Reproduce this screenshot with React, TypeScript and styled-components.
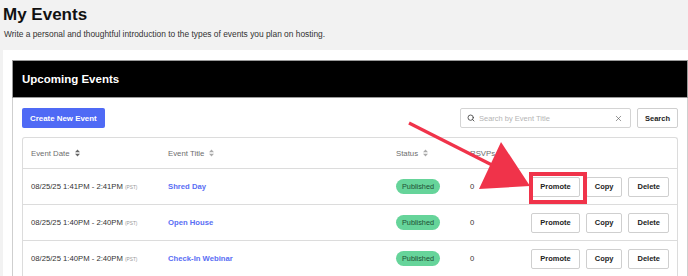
import React from "react";
import styled, { createGlobalStyle } from "styled-components";
import { Search, X } from "lucide-react";

const GlobalStyle = createGlobalStyle`
  html, body { margin: 0; padding: 0; }
  body {
    background: #f2f2f2;
    font-family: "Liberation Sans", Arial, sans-serif;
    overflow: hidden;
    width: 688px;
    height: 276px;
  }
  * { box-sizing: border-box; }
`;

const Page = styled.div`
  position: relative;
  width: 688px;
  height: 276px;
  padding: 5px 0 0 3px;
  overflow: hidden;
`;

const Title = styled.h1`
  margin: 0;
  font-size: 17px;
  line-height: 20px;
  font-weight: 700;
  color: #111;
`;

const Subtitle = styled.p`
  margin: 4px 0 0 1px;
  font-size: 8.4px;
  line-height: 10px;
  color: #333;
`;

const Card = styled.div`
  margin-top: 11px;
  background: #fff;
  padding: 10px 0 0 9px;
`;

const Panel = styled.div`
  width: 676px;
`;

const PanelHeader = styled.div`
  height: 38px;
  background: #000;
  border: 1px solid #9a9a9a;
  display: flex;
  align-items: center;
  padding-left: 9px;
  color: #fff;
  font-size: 11.5px;
  font-weight: 700;
`;

const PanelBody = styled.div`
  border-left: 1px solid #cfcfcf;
  border-right: 1px solid #cfcfcf;
  padding: 10px 9px 0 9px;
`;

const Toolbar = styled.div`
  display: flex;
  justify-content: space-between;
  align-items: center;
`;

const PrimaryButton = styled.button`
  height: 20px;
  padding: 0 8px;
  border: none;
  border-radius: 2px;
  background: #4f6af5;
  color: #fff;
  font-family: inherit;
  font-size: 7.9px;
  font-weight: 700;
  cursor: pointer;
`;

const SearchGroup = styled.div`
  display: flex;
  gap: 6px;
`;

const SearchBox = styled.div`
  width: 171px;
  height: 20px;
  border: 1px solid #d4d4d4;
  border-radius: 2px;
  display: flex;
  align-items: center;
  padding: 0 7px 0 6px;
  gap: 4px;
  color: #444;
`;

const SearchInput = styled.input`
  flex: 1;
  min-width: 0;
  border: none;
  outline: none;
  padding: 0;
  font-family: inherit;
  font-size: 7.5px;
  color: #333;
  &::placeholder { color: #b5b5b5; }
`;

const OutlineButton = styled.button<{ $pad?: number }>`
  height: 20px;
  padding: 0 ${(p) => p.$pad ?? 8}px;
  border: 1px solid #cfcfcf;
  border-radius: 2px;
  background: #fff;
  color: #222;
  font-family: inherit;
  font-size: 7.5px;
  font-weight: 700;
  cursor: pointer;
`;

const Table = styled.div`
  margin-top: 9px;
  border: 1px solid #dcdcdc;
  border-bottom: none;
  border-radius: 3px 3px 0 0;
  display: grid;
  grid-template-columns: 137px 228px 74px 1fr auto;
`;

const HeadCell = styled.div`
  height: 31px;
  border-bottom: 1px solid #dcdcdc;
  display: flex;
  align-items: center;
  gap: 5px;
  padding-left: 8px;
  font-size: 7.8px;
  color: #6e6e6e;
`;

const Cell = styled.div<{ $right?: boolean }>`
  height: 36px;
  border-bottom: 1px solid #dcdcdc;
  display: flex;
  align-items: center;
  padding-left: ${(p) => (p.$right ? 0 : 8)}px;
  padding-right: ${(p) => (p.$right ? 8 : 0)}px;
  gap: 6px;
  justify-content: ${(p) => (p.$right ? "flex-end" : "flex-start")};
  font-size: 7.7px;
  color: #333;
`;

const Tz = styled.span`
  font-size: 4.8px;
  color: #999;
  margin-left: 2px;
`;

const EventLink = styled.a`
  color: #5a6ef4;
  font-weight: 700;
  text-decoration: none;
  font-size: 7.7px;
`;

const Badge = styled.span`
  display: inline-flex;
  align-items: center;
  height: 15px;
  padding: 0 6px;
  border-radius: 8px;
  background: #66d49a;
  color: #1e4f34;
  font-size: 7.3px;
`;

const Overlay = styled.svg`
  position: absolute;
  left: 0;
  top: 0;
  pointer-events: none;
`;

const SortIcon = ({ dark }: { dark?: boolean }) => (
  <svg width="5" height="8" viewBox="0 0 5 8">
    <path d="M0 3.3 L2.5 0.5 L5 3.3 Z M0 4.7 L5 4.7 L2.5 7.5 Z" fill={dark ? "#666" : "#aaa"} />
  </svg>
);

const events = [
  { date: "08/25/25 1:41PM - 2:41PM", title: "Shred Day" },
  { date: "08/25/25 1:40PM - 2:40PM", title: "Open House" },
  { date: "08/25/25 1:40PM - 2:40PM", title: "Check-In Webinar" },
];

export default function App() {
  return (
    <>
      <GlobalStyle />
      <Page>
        <Title>My Events</Title>
        <Subtitle>
          Write a personal and thoughtful introduction to the types of events you plan on hosting.
        </Subtitle>
        <Card>
          <Panel>
            <PanelHeader>Upcoming Events</PanelHeader>
            <PanelBody>
              <Toolbar>
                <PrimaryButton>Create New Event</PrimaryButton>
                <SearchGroup>
                  <SearchBox>
                    <Search size={8} strokeWidth={2.6} />
                    <SearchInput placeholder="Search by Event Title" />
                    <X size={9} strokeWidth={1.6} color="#555" />
                  </SearchBox>
                  <OutlineButton $pad={7}>Search</OutlineButton>
                </SearchGroup>
              </Toolbar>
              <Table>
                <HeadCell>
                  Event Date <SortIcon dark />
                </HeadCell>
                <HeadCell>
                  Event Title <SortIcon />
                </HeadCell>
                <HeadCell>
                  Status <SortIcon />
                </HeadCell>
                <HeadCell>RSVPs</HeadCell>
                <HeadCell />
                {events.map((e, i) => (
                  <React.Fragment key={i}>
                    <Cell>
                      <span>
                        {e.date}
                        <Tz>(PST)</Tz>
                      </span>
                    </Cell>
                    <Cell>
                      <EventLink href="#">{e.title}</EventLink>
                    </Cell>
                    <Cell>
                      <Badge>Published</Badge>
                    </Cell>
                    <Cell>0</Cell>
                    <Cell $right>
                      <OutlineButton>Promote</OutlineButton>
                      <OutlineButton>Copy</OutlineButton>
                      <OutlineButton>Delete</OutlineButton>
                    </Cell>
                  </React.Fragment>
                ))}
              </Table>
            </PanelBody>
          </Panel>
        </Card>
        <Overlay width="688" height="276" viewBox="0 0 688 276">
          <line x1="409" y1="123" x2="492" y2="165" stroke="#f0334a" strokeWidth="3.2" />
          <polygon points="501,142 479,189 530,186" fill="#f0334a" />
          <rect x="531" y="174" width="54" height="28" fill="none" stroke="#f0334a" strokeWidth="4" />
        </Overlay>
      </Page>
    </>
  );
}
